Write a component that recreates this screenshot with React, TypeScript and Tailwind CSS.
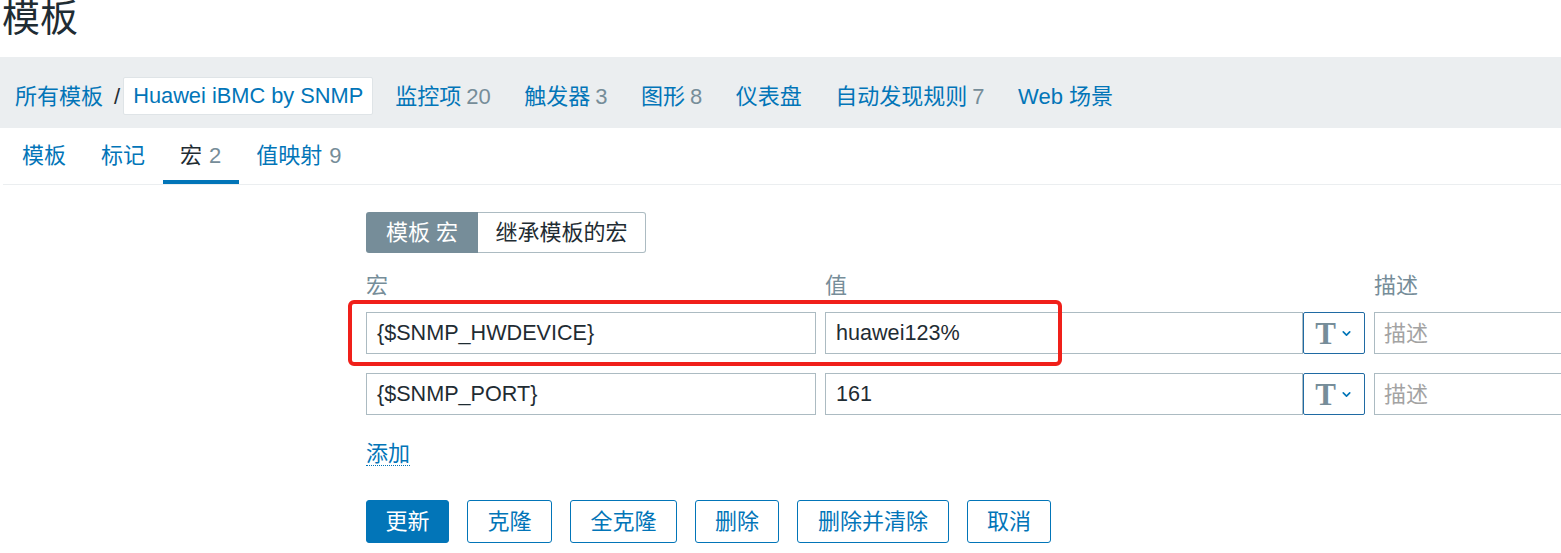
import { ChevronDown } from "lucide-react";

const FONT = '"Liberation Sans", "Noto Sans CJK SC", sans-serif';

const navLinks: { label: string; count?: number }[] = [
  { label: "监控项", count: 20 },
  { label: "触发器", count: 3 },
  { label: "图形", count: 8 },
  { label: "仪表盘" },
  { label: "自动发现规则", count: 7 },
  { label: "Web 场景" },
];

const tabs: { label: string; count?: number; active?: boolean }[] = [
  { label: "模板" },
  { label: "标记" },
  { label: "宏", count: 2, active: true },
  { label: "值映射", count: 9 },
];

const macros = [
  { name: "{$SNMP_HWDEVICE}", value: "huawei123%" },
  { name: "{$SNMP_PORT}", value: "161" },
];

const buttons = [
  { label: "更新", w: "w-[83px]", primary: true },
  { label: "克隆", w: "w-[85px]" },
  { label: "全克隆", w: "w-[107px]" },
  { label: "删除", w: "w-[84px]" },
  { label: "删除并清除", w: "w-[152px]" },
  { label: "取消", w: "w-[84px]" },
];

function TypeButton() {
  return (
    <button className="flex h-[42px] w-[62px] shrink-0 items-center justify-center gap-[4px] rounded-[2px] border border-[#1f6aa3] bg-white">
      <span
        className="text-[31px] leading-none font-bold text-[#768d99]"
        style={{ fontFamily: '"Liberation Serif", serif' }}
      >
        T
      </span>
      <ChevronDown className="h-[13px] w-[13px] text-[#0275b8]" strokeWidth={3} />
    </button>
  );
}

function MacroRow({ name, value }: { name: string; value: string }) {
  return (
    <div className="flex h-[42px] items-stretch">
      <div className="flex w-[450px] shrink-0 items-center border border-[#acbbc2] pl-[10px] text-[21.6px] text-[#1f2c33]">
        {name}
      </div>
      <div className="ml-[9px] flex w-[478px] shrink-0 items-center border border-[#acbbc2] pl-[10px] text-[21.6px] text-[#1f2c33]">
        {value}
      </div>
      <TypeButton />
      <div className="ml-[9px] flex w-[320px] shrink-0 items-center border border-[#acbbc2] pl-[9px] text-[22px] text-[#a3a3a3]">
        描述
      </div>
    </div>
  );
}

export default function App() {
  return (
    <div
      className="h-[553px] w-[1561px] overflow-hidden bg-white text-[#1f2c33]"
      style={{ fontFamily: FONT }}
    >
      {/* page title */}
      <div className="h-[57px] pl-[2px] text-[38px] leading-[36px] text-[#1f2c33]">模板</div>

      {/* breadcrumb + nav */}
      <div className="flex h-[71px] items-start bg-[#ebeef0] pt-[20px] pl-[15px] text-[22px]">
        <div className="flex h-[38px] items-center text-[#0275b8]">所有模板</div>
        <div className="flex h-[38px] items-center pr-[3px] pl-[11px] text-[#1f2c33]">/</div>
        <div className="flex h-[38px] items-center rounded-[2px] border border-[#dfe4e7] bg-white px-[9px] text-[21.8px] text-[#0275b8]">
          Huawei iBMC by SNMP
        </div>
        <div className="flex h-[38px] items-center gap-[33.5px] pl-[22px]">
          {navLinks.map((l) => (
            <span key={l.label} className="whitespace-nowrap text-[#0275b8]">
              {l.label}
              {l.count !== undefined && <span className="ml-[5px] text-[#768d99]">{l.count}</span>}
            </span>
          ))}
        </div>
      </div>

      {/* tab panel */}
      <div className="ml-[3px] bg-white">
        <div className="flex h-[57px] border-b border-[#ebeef0] pl-[1.5px] text-[22px]">
          {tabs.map((t) => (
            <div
              key={t.label}
              className={
                t.active
                  ? "flex items-center border-b-4 border-[#0275b8] px-[17.5px] pt-[2px] text-[#1f2c33]"
                  : "flex items-center border-b-4 border-transparent px-[17.5px] pt-[2px] text-[#0275b8]"
              }
            >
              {t.label}
              {t.count !== undefined && <span className="ml-[7px] text-[#768d99]">{t.count}</span>}
            </div>
          ))}
        </div>

        <div className="pl-[363px] pt-[27px] pb-[20px] text-[22px]">
          {/* sub tabs */}
          <div className="flex h-[41px]">
            <div className="flex w-[112px] items-center justify-center rounded-l-[3px] bg-[#768d99] text-white">
              模板 宏
            </div>
            <div className="flex w-[168px] items-center justify-center rounded-r-[3px] border border-l-0 border-[#acbbc2] text-[#1f2c33]">
              继承模板的宏
            </div>
          </div>

          {/* column labels */}
          <div className="mt-[22px] flex leading-[22px] text-[#768d99]">
            <span className="w-[459px] shrink-0">宏</span>
            <span className="w-[549px] shrink-0">值</span>
            <span>描述</span>
          </div>

          {/* rows */}
          <div className="relative mt-[15px] flex flex-col gap-[19px]">
            {macros.map((m) => (
              <MacroRow key={m.name} name={m.name} value={m.value} />
            ))}
            {/* annotation highlight */}
            <div className="pointer-events-none absolute top-[-12px] left-[-18px] h-[66px] w-[714px] rounded-[6px] border-[4px] border-[#f0201a]" />
          </div>

          {/* add link */}
          <div className="mt-[28px] flex">
            <span className="border-b border-dotted border-[#0275b8] leading-[22px] text-[#0275b8]">添加</span>
          </div>

          {/* form buttons */}
          <div className="mt-[34px] flex gap-[18px]">
            {buttons.map((b) => (
              <button
                key={b.label}
                className={
                  b.primary
                    ? `${b.w} flex h-[43px] items-center justify-center rounded-[3px] border border-[#0275b8] bg-[#0275b8] text-white`
                    : `${b.w} flex h-[43px] items-center justify-center rounded-[3px] border border-[#0275b8] bg-white text-[#0275b8]`
                }
              >
                {b.label}
              </button>
            ))}
          </div>
        </div>
      </div>
    </div>
  );
}
